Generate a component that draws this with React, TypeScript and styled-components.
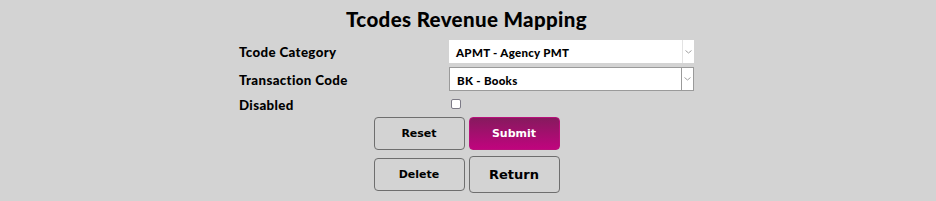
import React from "react";
import styled, { createGlobalStyle } from "styled-components";

const Global = createGlobalStyle`
  html, body { margin: 0; padding: 0; background: #d3d3d3; }
  body { font-family: Lato, "DejaVu Sans", sans-serif; color: #000; }
`;

const Page = styled.div`
  display: flex;
  flex-direction: column;
  align-items: center;
  padding-top: 7px;
  padding-right: 3px;
`;

const Title = styled.h1`
  margin: 0 0 9px 0;
  font-family: Lato, sans-serif;
  font-size: 20.5px;
  line-height: 24px;
  font-weight: 900;
  letter-spacing: 0.35px;
`;

const Form = styled.div`
  display: grid;
  grid-template-columns: 210px 245px;
  row-gap: 4px;
  align-items: center;
  width: 455px;
`;

const Label = styled.div`
  font-family: Lato, sans-serif;
  font-size: 13.3px;
  line-height: 16px;
  font-weight: 900;
  letter-spacing: 0.35px;
  padding-top: 1px;
`;

const SelectBox = styled.div<{ $bordered?: boolean }>`
  display: flex;
  align-items: stretch;
  height: ${(p) => (p.$bordered ? "22px" : "23px")};
  background: #fff;
  border: ${(p) => (p.$bordered ? "1px solid #9a9a9a" : "none")};
`;

const SelectText = styled.div`
  flex: 1;
  font-family: Lato, sans-serif;
  font-size: 11.5px;
  font-weight: 900;
  letter-spacing: 0.3px;
  display: flex;
  align-items: center;
  padding-left: 7px;
  padding-top: 2px;
`;

const Arrow = styled.div<{ $bordered?: boolean }>`
  width: 11px;
  border-left: 1px solid ${(p) => (p.$bordered ? "#9a9a9a" : "#e3e3e3")};
  display: flex;
  align-items: center;
  justify-content: center;
  background: #fff;
`;

const CheckCell = styled.div`
  display: flex;
  align-items: center;
  height: 18px;
  padding-left: 2px;
`;

const Check = styled.span`
  display: block;
  width: 8px;
  height: 8px;
  background: #fff;
  border: 1px solid #7c7a86;
  border-radius: 2px;
`;

const Buttons = styled.div`
  display: grid;
  grid-template-columns: 91px 91px;
  column-gap: 4px;
  row-gap: 6px;
  margin-top: 4px;
  align-items: center;
`;

const Button = styled.button<{ $primary?: boolean; $big?: boolean }>`
  height: ${(p) => (p.$big ? "37px" : "33px")};
  border-radius: 4px;
  border: 1px solid ${(p) => (p.$primary ? "#b8107a" : "#6e6e6e")};
  background: ${(p) =>
    p.$primary ? "linear-gradient(to bottom, #861a5e, #c0047e)" : "#d3d3d3"};
  color: ${(p) => (p.$primary ? "#fff" : "#000")};
  font-family: "DejaVu Sans", sans-serif;
  font-weight: bold;
  font-size: ${(p) => (p.$big ? "13px" : "11px")};
  padding: 0;
  cursor: pointer;
`;

const Chevron = () => (
  <svg width="7" height="4" viewBox="0 0 7 4">
    <path d="M0.5 0.5 L3.5 3 L6.5 0.5" fill="none" stroke="#a0a0a0" strokeWidth="1" />
  </svg>
);

export default function App() {
  return (
    <>
      <Global />
      <Page>
        <Title>Tcodes Revenue Mapping</Title>
        <Form>
          <Label>Tcode Category</Label>
          <SelectBox>
            <SelectText>APMT - Agency PMT</SelectText>
            <Arrow>
              <Chevron />
            </Arrow>
          </SelectBox>
          <Label>Transaction Code</Label>
          <SelectBox $bordered>
            <SelectText>BK - Books</SelectText>
            <Arrow $bordered>
              <Chevron />
            </Arrow>
          </SelectBox>
          <Label>Disabled</Label>
          <CheckCell>
            <Check />
          </CheckCell>
        </Form>
        <Buttons>
          <Button>Reset</Button>
          <Button $primary>Submit</Button>
          <Button>Delete</Button>
          <Button $big>Return</Button>
        </Buttons>
      </Page>
    </>
  );
}
